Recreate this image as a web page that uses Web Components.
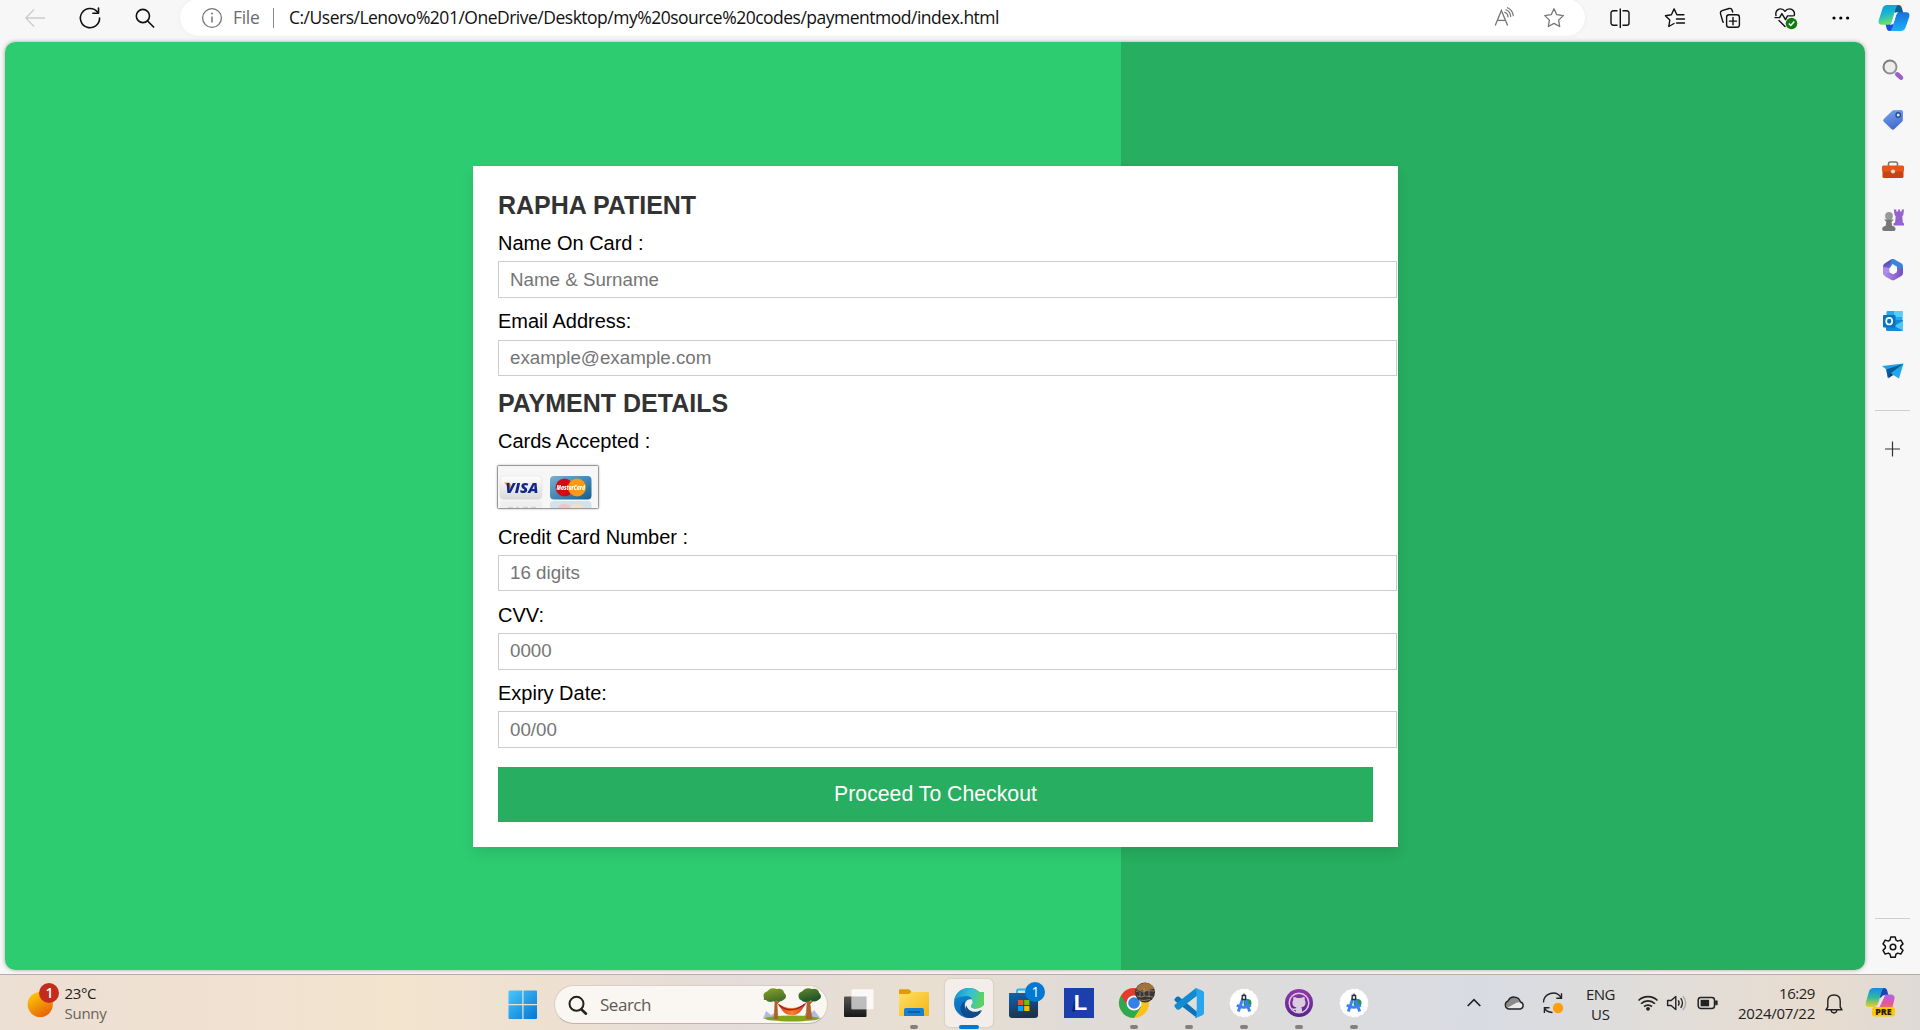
<!DOCTYPE html>
<html lang="en">
<head>
<meta charset="utf-8">
<title>Payment</title>
<style>
html,body{margin:0;height:100%;overflow:hidden}
body{font-family:"Liberation Sans",Arial,sans-serif;background:#f7f7f7}
</style>
</head>
<body>
<desktop-screen></desktop-screen>
<script>
const ICONS = {
back:[24,24,`<path d="M22 12H3M11 3.5 2.8 12l8.2 8.5" fill="none" stroke="#ccc" stroke-width="1.3"/>`],
reload:[24,24,`<path d="M19.6 6.2A9.6 9.6 0 1 0 21.6 12" fill="none" stroke="#111" stroke-width="1.6" stroke-linecap="round"/><path d="M20.5 2v5.3h-5.6" fill="none" stroke="#111" stroke-width="1.6" stroke-linecap="round" stroke-linejoin="round"/>`],
find:[24,24,`<circle cx="9.9" cy="10" r="6.6" fill="none" stroke="#111" stroke-width="1.6"/><path d="m14.6 15 6 6" stroke="#111" stroke-width="1.7" stroke-linecap="round"/>`],
info:[24,24,`<circle cx="12" cy="12" r="9.4" fill="none" stroke="#757575" stroke-width="1.3"/><path d="M12 10.6v6" stroke="#757575" stroke-width="1.5"/><circle cx="12" cy="7.6" r="1" fill="#757575"/>`],
aloud:[24,24,`<path d="M3.2 19.5 9.4 4.4l6.2 15.100M5.600 14.300h7.700" fill="none" stroke="#757575" stroke-width="1.3"/><path d="M12.800 6.200a5 5 0 0 1 3.200 4.600M14 3.800a7.700 7.700 0 0 1 4.700 6.800M15.500 1.700a10 10 0 0 1 5.800 8" fill="none" stroke="#757575" stroke-width="1.2" stroke-linecap="round"/>`],
star:[24,24,`<path d="m12 2.800 2.800 5.900 6.500.9-4.700 4.500 1.100 6.400L12 17.400l-5.700 3.100 1.100-6.400L2.700 9.600l6.500-.9z" fill="none" stroke="#757575" stroke-width="1.300" stroke-linejoin="round"/>`],
split:[24,24,`<path d="M9.500 4.800H5.200A2.200 2.200 0 0 0 3 7v10a2.200 2.200 0 0 0 2.200 2.200h4.300M14.500 4.800h4.300A2.200 2.200 0 0 1 21 7v10a2.200 2.200 0 0 1-2.200 2.200h-4.300M12.300 2.500v19.500" fill="none" stroke="#111" stroke-width="1.400"/>`],
favs:[24,24,`<path d="M11 17.500 5.800 20.500 6.800 14 2.400 9.700l6-1 2.700-5.800 2.800 5.800h7M13.500 13h8M13.500 17h8" fill="none" stroke="#111" stroke-width="1.400" stroke-linejoin="round" stroke-linecap="round"/>`],
collect:[24,24,`<rect x="8.600" y="8.700" width="12.800" height="12.600" rx="2.600" fill="none" stroke="#111" stroke-width="1.400"/><path d="M15 11.500v7.200M11.400 15.100h7.200M5.300 16.200 4.900 16 2.500 7.600a2.300 2.300 0 0 1 1.600-2.900l7-2.200a2.300 2.300 0 0 1 2.900 1.600l.7 1.900" fill="none" stroke="#111" stroke-width="1.400" stroke-linecap="round"/>`],
heart:[24,24,`<path d="M3 9.500C2 5 5 2.900 7.500 2.900c2.200 0 3.800 1.300 4.500 2.400.7-1.100 2.300-2.400 4.500-2.400 3 0 5.800 2.700 4.700 6.600M2 11.600h4.600l2.300-4 3.600 6 2-3.700h5.500M6 14.500l6 6" fill="none" stroke="#111" stroke-width="1.400" stroke-linejoin="round" stroke-linecap="round"/><circle cx="18.500" cy="17.500" r="5.800" fill="#107c10"/><path d="m15.800 17.500 2 2 3.500-4" fill="none" stroke="#fff" stroke-width="1.500"/>`],
dots:[24,24,`<circle cx="5" cy="12" r="1.600"/><circle cx="11.800" cy="12" r="1.600"/><circle cx="18.600" cy="12" r="1.600"/>`],
copilot:[32,28,`<defs><linearGradient id="a" x2=".3" y2="1"><stop offset="0" stop-color="#0a9bd8"/><stop offset=".5" stop-color="#19b5d2"/><stop offset="1" stop-color="#6ce36a"/></linearGradient><linearGradient id="b" x2="0" y2="1"><stop offset="0" stop-color="#1a6fdc"/><stop offset="1" stop-color="#18b1fa"/></linearGradient></defs><path d="M12 1h8.500c2 0 2.700 1 3.300 2.800L25.300 9H17z" fill="#0b5f93"/><path d="M19 27h-7.400c-1.800 0-2.500-1.200-3-2.700L7.200 19H15z" fill="#1b4be0"/><path d="M9.500 1H20.500c-1.700.4-2.300 2-2.800 3.500L14 17.600c-.7 2.100-1.800 3.200-4 3.200H4c-3 0-4-1.600-3.200-4.700L4.300 5C5 2.600 6.700 1 9.500 1z" fill="url(#a)"/><path d="M22.500 27H11.500c1.700-.4 2.300-2 2.800-3.500L18 11.400c.7-2.100 1.800-3.200 4-3.200h6c3 0 4 1.600 3.200 4.700L27.700 23c-.7 2.400-2.400 4-5.200 4z" fill="url(#b)"/><path d="M16.500 9.500q.8-1.300 2.500-1.300h1.500q-1.700.5-2.400 2.500L15.600 19q-.6 1.700-2.600 1.800h-1.500q1.600-.6 2.300-2.500z" fill="#fff"/>`],
sfind:[24,24,`<defs><linearGradient id="a" x2="1" y2="1"><stop stop-color="#777"/><stop offset="1" stop-color="#999"/></linearGradient></defs><path d="m14 15 2 1.500" stroke="#aaa" stroke-width="2.500"/><circle cx="9" cy="9" r="6.500" fill="#ededed" stroke="url(#a)" stroke-width="2"/><path d="m16.500 16.500 3.500 3.200" stroke="#9b5fc8" stroke-width="4.500" stroke-linecap="round"/>`],
tag:[24,24,`<defs><linearGradient id="a" x2=".3" y2="1"><stop stop-color="#78a8ef"/><stop offset="1" stop-color="#456bcb"/></linearGradient></defs><path d="M12.500 2.200 20 2q2 0 2 2l-.2 8q0 1-.8 1.700l-7.600 7.300q-1.500 1.400-3 0L2.800 13.700q-1.300-1.400 0-2.800L11 3q.6-.7 1.500-.8z" fill="url(#a)"/><circle cx="17.200" cy="7" r="2.200" fill="#dce9ff" stroke="#25489c" stroke-width="1.400"/>`],
tools:[24,24,`<path d="M7.500 8V5.800Q7.500 4 9.300 4h5.400q1.800 0 1.800 1.800V8" fill="none" stroke="#777" stroke-width="1.600"/><rect x="1.500" y="8" width="21" height="12" rx="1.500" fill="#c8430f"/><path d="M1 9q0-1.500 1.500-1.500h19Q23 7.500 23 9v3.500q0 1-1.500 1h-19Q1 13.500 1 12.500z" fill="#e6561c"/><circle cx="12" cy="13.500" r="2.100" fill="#d7dbe0"/>`],
chess:[24,24,`<path d="M12.800 1.500h2.500v2h1.800v-2H19v2h1.700v-2H23L22.300 7l-1 1.200.5 6.200 1.200 1v2H12.500v-2l1.600-1 .6-6.200-1.100-1.200z" fill="#9560cf"/><circle cx="8" cy="8" r="3.900" fill="#999"/><path d="M3 11.500h10l-2.500 2.200.7 4.300q3.300.3 3.300 3 0 2-1.500 2H3q-1.800 0-1.800-2 0-2.700 3.400-3l.7-4.300z" fill="#777"/>`],
m365:[24,24,`<defs><linearGradient id="a" x2="0" y2="1"><stop stop-color="#5c3ba5"/><stop offset="1" stop-color="#6c9cf4"/></linearGradient><linearGradient id="b" x1="1" x2="0"><stop stop-color="#6f4fc4"/><stop offset="1" stop-color="#b98ae6"/></linearGradient></defs><path d="M10 1.500q2-.8 4 .3L9.500 9v6l-3 4.200-3-1.700Q2 16.600 2 14.500v-6q0-2 1.600-3z" fill="url(#a)"/><path d="M10.500 1.400q1.500-.7 3 0L20.300 5.300Q22 6.400 22 8.500V15l-6-2.500V8.700L11.500 6 8 8.500z" fill="#3a84e0"/><path d="M22 11v4q0 2-1.600 3l-7 4q-1.400.8-3 0l-7-4 5.500-3.500 4 1 3.600-2.800V9.500z" fill="url(#b)"/><path d="M2 9v5.500q0 2 1.500 3l5.500-3.500v-4z" fill="#b48be8"/><path d="m12 8.200 3.600 2v4.200L12 16.300l-3.600-2V10z" fill="#fff"/>`],
outlook:[24,24,`<rect x="5.500" y="2" width="16" height="12" rx="1" fill="#28a8e8"/><path d="M13 2h8.500v6H13z" fill="#50d0fa"/><path d="M5 11h17v9.500q0 1.500-1.500 1.500h-14Q5 22 5 20.500z" fill="#1489d8"/><path d="M22 12v9.500L13 17z" fill="#50c8f5"/><rect x="2" y="6" width="12.500" height="12.500" rx="1" fill="#0872c4"/><ellipse cx="8.200" cy="12.200" rx="3" ry="3.300" fill="none" stroke="#fff" stroke-width="1.700"/>`],
plane:[24,24,`<defs><linearGradient id="a" x2="0" y2="1"><stop stop-color="#18a4e0"/><stop offset="1" stop-color="#2aa7f5"/></linearGradient></defs><path d="m1 7 21.500-2.500L18 19.500 12 16l-5.500 2.500L6 11z" fill="url(#a)"/><path d="M5 10.500 22 5 9.500 14.500 7 19z" fill="#075a9c"/><path d="m9.500 14 2.700 2L7 19.500z" fill="#0a3c73"/>`],
plus:[24,24,`<path d="M11.500 4.500v15M4 12h15" stroke="#333" stroke-width="1.200"/>`],
gear:[24,24,`<path d="m9.800 1.900h4.400l.8 3.200 1.700 1 3.100-1 2.200 3.800-2.300 2.200v2l2.300 2.200-2.200 3.800-3.100-1-1.700 1-.8 3.100H9.800L9 19.100l-1.700-1-3.100 1L2 15.300l2.300-2.200v-2L2 8.900l2.200-3.800 3.100 1 1.700-1z" fill="none" stroke="#111" stroke-width="1.500" stroke-linejoin="round"/><circle cx="12" cy="12" r="2.800" fill="none" stroke="#111" stroke-width="1.500"/>`],
cards:[102,44,`<defs><linearGradient id="w" x2="0" y2="1"><stop stop-color="#fff"/><stop offset="1" stop-color="#d9d9d9"/></linearGradient><linearGradient id="m" x2="1" y2="1"><stop stop-color="#78b2d1"/><stop offset="1" stop-color="#125e96"/></linearGradient><clipPath id="c"><rect x="1" y="35" width="99" height="8"/></clipPath></defs><rect x=".5" y=".5" width="101" height="43" rx="1" fill="#f6f6f6" stroke="#999"/><rect x="3" y="11" width="42" height="23.500" rx="4" fill="url(#w)" stroke="#e2e2e2" stroke-width=".7"/><rect x="53" y="11" width="41.500" height="23.500" rx="4" fill="url(#m)"/><path d="M7 17.500h5.500l2.500 4-2 3z" fill="#f4a52a"/><text x="8.500" y="27.600" font-family="Open Sans" font-size="13.500" font-weight="800" font-style="italic" fill="#11278c" textLength="33" lengthAdjust="spacingAndGlyphs">VISA</text><circle cx="67.500" cy="22.500" r="9" fill="#d00b12"/><circle cx="80" cy="22.500" r="9" fill="#f99b12"/><text x="59.500" y="25.200" font-family="Open Sans" font-size="7" font-weight="800" font-style="italic" fill="#fff" textLength="28.500" lengthAdjust="spacingAndGlyphs">MasterCard</text><g clip-path="url(#c)" opacity=".25"><rect x="3" y="36" width="42" height="12" rx="4" fill="#ddd"/><rect x="53" y="36" width="41.500" height="12" rx="4" fill="#6ba8ca"/><circle cx="67.500" cy="47" r="8" fill="#e33"/><circle cx="80" cy="47" r="8" fill="#f93"/><path d="m11 42.500h5m3 0h3m4 0h5m3 0h5" stroke="#668" stroke-width="1.500"/></g>`],
sun:[34,36,`<defs><linearGradient id="a" x1=".2" x2=".8" y2="1"><stop stop-color="#fccb08"/><stop offset="1" stop-color="#e65c04"/></linearGradient></defs><circle cx="13.200" cy="21.500" r="12.600" fill="url(#a)"/><circle cx="22" cy="10" r="10" fill="#c42b1c"/><text x="22.400" y="15.200" text-anchor="middle" font-family="Open Sans" font-size="14" fill="#fff" font-weight="600">1</text>`],
windows:[30,30,`<defs><linearGradient id="a" gradientUnits="userSpaceOnUse" x1="0" y1="0" x2="29" y2="29"><stop stop-color="#48c9fd"/><stop offset="1" stop-color="#0676d4"/></linearGradient></defs><path d="M1.500.5h12.800V14H.5V1.500q0-1 1-1zM15.500.5H28q1 0 1 1V14H15.500zM.5 15.200h13.800v13.800H1.500q-1 0-1-1zM15.500 15.200H29V28q0 1-1 1H15.500z" fill="url(#a)"/>`],
tfind:[22,22,`<circle cx="9.500" cy="9.800" r="7" fill="none" stroke="#222" stroke-width="2"/><path d="m14.500 15.500 4.500 4.200" stroke="#222" stroke-width="2.600" stroke-linecap="round"/>`],
trees:[58,34,`<defs><linearGradient id="g" x2="1" y2="1"><stop stop-color="#8da329"/><stop offset="1" stop-color="#0d4928"/></linearGradient><linearGradient id="h" x2="1"><stop stop-color="#d4331d"/><stop offset=".5" stop-color="#f58627"/><stop offset="1" stop-color="#d52c3c"/></linearGradient></defs><path d="m0 31 3-8 5 4 4-2 4 6zM39 31l4-6 4 2 4-5 7 9z" fill="#b5b9dc"/><ellipse cx="29" cy="30.500" rx="27" ry="3" fill="#83a51e"/><path d="m11 31 1-17-5-4 5 3 1-4 1 5 6-4-6 6 1 15zM43 31l1-16-5-4 6 3 1-4 1 4 6-4-6 6 2 15z" fill="#a9632c" stroke="#a9632c" stroke-width=".6"/><path d="M1 10Q-1 5 4 3.500q4-5 10-2.500 6-1 7 3.500 4 4.500 0 7-4 3.500-8 1-7 3-10-.5Q0 12.500 1 10zM36 10q-2-5 3-6.500 4-5 10-2.500 6-1 7 3.500 4 4.500 0 7-4 3.500-8 1-7 3-10-.5-2-.5-2-2z" fill="url(#g)"/><path d="M14 15q7 5 14 5 9 0 16-6l-6 9q-4 5-10 4-6 0-9-5z" fill="url(#h)"/><path d="M16 17q12 10 26-1" fill="none" stroke="#a51d22" stroke-width="1.400"/>`],
taskview:[30,28,`<defs><linearGradient id="a" x2="0" y2="1"><stop stop-color="#555"/><stop offset="1" stop-color="#171717"/></linearGradient></defs><rect y="7.500" width="22.500" height="20.500" rx="1" fill="url(#a)"/><rect x="7.500" y=".3" width="22" height="20" rx="1" fill="#fff" opacity=".8"/><path d="M7.500 7.500h15v12.800h-15z" fill="#aaa" opacity=".6"/>`],
folder:[30,28,`<defs><linearGradient id="a" x2="1" y2="1"><stop stop-color="#ffe069"/><stop offset="1" stop-color="#f4b411"/></linearGradient></defs><path d="M0 1.500Q0 .3 1.200.3h8q1 0 1.700.8L13 3.500V9H0z" fill="#e19a05"/><path d="M0 5h10l2.500-2H29q1 0 1 1v22q0 1-1 1H1q-1 0-1-1z" fill="url(#a)"/><path d="M5 27v-6q0-2 2-2h16q2 0 2 2v6z" fill="#167ed3"/><path d="M9 23h12" stroke="#0c4b85" stroke-width="1.300"/>`],
edge:[30,30,`<defs><linearGradient id="a" gradientUnits="userSpaceOnUse" x1="0" y1="5" x2="30" y2="14"><stop stop-color="#1793cf"/><stop offset=".5" stop-color="#35c1d6"/><stop offset="1" stop-color="#62d64a"/></linearGradient><linearGradient id="b" x2=".3" y2="1"><stop stop-color="#1487cd"/><stop offset="1" stop-color="#096bc0"/></linearGradient></defs><circle cx="15" cy="15" r="15" fill="url(#b)"/><path d="M0 13C1.500 3 9 0 15 0c8.500 0 15 6.500 15 13 0 5-3.600 7.500-8 7.500-3.800 0-5.700-1.500-4.500-3.200C20 14 18.500 7 10.500 8.200 5.500 8.500 1.500 10 0 13z" fill="url(#a)"/><path d="M11 13c-3 8 3 14 10 13 3-.4 5-2 6.500-3C24 29 19 30.500 14 30 6 28.500 3.500 17 11 13z" fill="#124b8c"/><path d="M18 11.500c-5-1.500-9 4-6 9 3 5.500 10 6 15 2.500l3-2.500v-4c-2.500 4-8 4.800-11.300 3.500-1.700-.6-2.300-1.500-1.200-2.900 1.300-1.500 1.800-3.800.5-5.600z" fill="#f2efea"/><path d="M18 12c2 3-.5 4.300-.8 5.900-.4 1.800 2 2.600 4.800 2.600 4.500 0 8-2.800 8-7.500V4H19z" fill="url(#a)"/><path d="M27 22c-7 4-13 1-15-5-1 8 5 12 11 10q3-1 4-5z" fill="#124b8c"/>`],
store:[38,38,`<defs><linearGradient id="a" x2=".3" y2="1"><stop stop-color="#0e65b4"/><stop offset="1" stop-color="#20324b"/></linearGradient></defs><path d="M8 13V9q0-1.500 1.500-1.500H20" fill="none" stroke="#1db7ed" stroke-width="1.800"/><path d="M0 11h29v22q0 3-3 3H3q-3 0-3-3z" fill="url(#a)"/><path d="M9 18h5.300v5H9z" fill="#f25022"/><path d="M15.200 18h5.200v5h-5.200z" fill="#7fba00"/><path d="M9 24h5.300v5H9z" fill="#00a4ef"/><path d="M15.200 24h5.200v5h-5.200z" fill="#ffb900"/><circle cx="26" cy="10" r="10" fill="#0078d4"/><text x="26.500" y="15.200" text-anchor="middle" font-family="Open Sans" font-size="14" fill="#fff">1</text>`],
lbox:[30,30,`<path d="M0 0h30v30H0z" fill="#1d3fae"/><path d="m8 24 3.500-16v15z" fill="#0e2254"/><text x="9.700" y="21.900" font-family="Liberation Sans" font-weight="bold" font-size="22" fill="#fff">L</text>`],
chrome:[36,36,`<circle cx="15" cy="21" r="15" fill="#fbc116"/><path d="M15 21 2 13.500A15 15 0 0 0 15 36l7-11z" fill="#2da94f"/><path d="M2 13.500A15 15 0 0 1 28 13.500L15 15l-6.500 9z" fill="#e33b2e"/><circle cx="15" cy="21" r="7.500" fill="#fff"/><circle cx="15" cy="21" r="5.800" fill="#347fe8"/><circle cx="26" cy="10.500" r="10" fill="#3b3532"/><path d="M17 7.500C20-1 32-1 35.500 6.500L26 9z" fill="#a0733e"/><path d="m17 9.500 4-1 3 1.500 4-1.500 7 .5M18 14l4 1 4-1 8 1M20 18l5 .5 6-1M25 6v8M21 10v5M30 9v6" stroke="#beb19d" stroke-width="1" fill="none" opacity=".55"/>`],
vscode:[30,30,`<path d="m2.700 8.800 2.100-.4L23 23.800V30L1 13q-1.500-1.200 0-2.600z" fill="#0d72b7"/><path d="M1 19.200q-1.500-1.500 0-2.700L22 0l2 7L5 21.800l-2.200-.4z" fill="#138bd0"/><path d="m22 0 6.500 2.800Q30 3.500 30 5v20q0 1.500-1.500 2.200L22 30q-2 0 .5-3V3q-2.500-3-.5-3z" fill="#27a5ed"/><path d="M22.500 8.500v13L14 15z" fill="#deddd9"/>`],
android:[30,30,`<circle cx="15" cy="15" r="13.600" fill="#fff" stroke="#fff" stroke-width="1.500" stroke-dasharray="4 1"/><circle cx="18.500" cy="15" r="4" fill="#209653"/><path d="m14 10-4.700 13.500M15.800 10l4.900 13.500M7.800 17.300q7 4 14 0" stroke="#3d82f0" stroke-width="2.900" fill="none"/><path d="M13.200 7.500h3.400v4h-3.400zM15 5.500v2" fill="#eee" stroke="#253142" stroke-width="1.300"/>`],
github:[30,30,`<defs><linearGradient id="a" x2="0" y2="1"><stop stop-color="#9237aa"/><stop offset="1" stop-color="#59258e"/></linearGradient></defs><circle cx="15" cy="15" r="14" fill="url(#a)"/><circle cx="15" cy="15" r="9.800" fill="none" stroke="#d9ccdf" stroke-width="1.500"/><path d="M9.500 9q2.300.1 3.500 1h4q1.500-1 3.500-1 .6 1.800.2 3 1.300 1.800.7 4-.8 3-4.200 3.300.8 1 .8 2.200v3h-6v-2.200q-3.200.5-4.500-2.600 2.500 1.600 4.600.4l.3-.9Q9 19 8.500 16q-.4-2.300.8-4-.4-1.400.2-3z" fill="#d9ccdf"/>`],
up:[24,24,`<path d="m5.700 15 6.300-6.300 6.300 6.300" fill="none" stroke="#222" stroke-width="1.700"/>`],
cloud:[24,24,`<path d="M6.500 18a4.300 4.300 0 0 1-.3-8.200 6.500 6.500 0 0 1 12.200 1.200 3.600 3.600 0 0 1 0 7z" fill="#e9e9e9"/><path d="M6 9.800a6.300 6.300 0 0 1 12 1.200l-3.500.8L6 16.500 3 13z" fill="#8b8b8b"/><path d="M6.500 18a4.300 4.300 0 0 1-.3-8.200 6.500 6.500 0 0 1 12.200 1.200 3.600 3.600 0 0 1 0 7z" fill="none" stroke="#222" stroke-width="1.400"/>`],
sync:[24,24,`<path d="M2.500 11.500A9.500 9.500 0 0 1 20 6.500M20.500 2.300v5h-5.200M8.500 16.700H3.400V22M3.500 17q1.500 4 8 4.500" fill="none" stroke="#222" stroke-width="1.400"/><circle cx="17" cy="17" r="5.200" fill="#ff9e0c"/>`],
wifi:[24,24,`<path d="M2.500 9.500a13.500 13.500 0 0 1 19 0M5 12.700a10 10 0 0 1 14 0M8 15.700a5.800 5.800 0 0 1 8 0" fill="none" stroke="#222" stroke-width="1.600"/><circle cx="12" cy="17.800" r="1.900" fill="#222"/>`],
volume:[24,24,`<path d="M2.600 9.500v5h3.500l4.700 4V5.500l-4.700 4z" fill="none" stroke="#222" stroke-width="1.400" stroke-linejoin="round"/><path d="M13.300 9.300q1.700 2.700 0 5.400M15.700 7.200q3.500 4.800 0 9.600" fill="none" stroke="#222" stroke-width="1.300"/><path d="M18 5q5.300 7 0 14" fill="none" stroke="#aaa" stroke-width="1.300"/>`],
battery:[24,24,`<rect x="2.200" y="6.500" width="16.300" height="11" rx="2.700" fill="none" stroke="#222" stroke-width="1.500"/><rect x="4.600" y="8.800" width="8.500" height="6.500" fill="#222"/><path d="M19.300 9.800h2v4h-2z" stroke="#222" fill="#222" stroke-width=".6"/>`],
bell:[24,24,`<path d="M5.800 16V10q0-6 6.200-6t6.200 6v6l1.800 2.800H4zM9 19q.5 3 3 3t3-3" fill="none" stroke="#222" stroke-width="1.400" stroke-linejoin="round"/>`],
pre:[32,32,`<defs><linearGradient id="a" x2="0" y2="1"><stop stop-color="#178ae9"/><stop offset=".5" stop-color="#31b9a0"/><stop offset="1" stop-color="#f3cf18"/></linearGradient><linearGradient id="b" x2="0" y2="1"><stop stop-color="#aa65ed"/><stop offset=".6" stop-color="#e6549a"/><stop offset="1" stop-color="#f17550"/></linearGradient></defs><path d="M12 1h7q3 0 3.500 4l1 3.500L14 11z" fill="#1a43b5"/><path d="M8.500 1H19q-2 1-2.500 4l-3 10q-1 5-5 5H4Q-.5 20 1 15L4 4.500Q5 1 8.500 1z" fill="url(#a)"/><path d="M13 20q2-6 3.500-9.500 1-3 4.500-3h5q4.500.5 3.300 5L27 22H12z" fill="url(#b)"/><path d="m16.500 10 1.500-1.500h2L15.500 18l-1.200 2H11q2-1 2.700-3.500z" fill="#eee6ea"/><rect x="7" y="20" width="23" height="9.500" rx="2.500" fill="#ffc800"/><text x="18.500" y="27.800" text-anchor="middle" font-family="Open Sans" font-size="8.500" font-weight="800" textLength="16.500" lengthAdjust="spacingAndGlyphs" fill="#231b08">PRE</text>`]
};
function define(name, html, setup){
  const t=document.createElement('template'); t.innerHTML=html;
  customElements.define(name, class extends HTMLElement{
    connectedCallback(){
      if(this.shadowRoot) return;
      const r=this.attachShadow({mode:'open'});
      r.append(t.content.cloneNode(true));
      if(setup) setup.call(this,r);
    }
  });
}
define('ui-icon','<style>:host{display:block;flex:none}svg{display:block;overflow:visible}</style>',function(r){
  const [w,h,body]=ICONS[this.getAttribute('name')];
  const box=document.createElement('div');
  box.innerHTML=`<svg width="${w}" height="${h}" viewBox="0 0 ${w} ${h}">${body}</svg>`;
  r.append(box);
});
/* Text line whose letter spacing is tuned to fill a given width. */
define('fit-text','<style>:host{display:block;white-space:pre;flex:none}span{display:inline-block}</style><span><slot></slot></span>',function(r){
  const s=r.querySelector('span'), n=this.textContent.length;
  const w=+this.getAttribute('width');
  this.style.width=w+'px';
  s.style.letterSpacing=((w-s.getBoundingClientRect().width)/n)+'px';
});
define('address-bar',`<style>
:host{display:flex;align-items:center;box-sizing:border-box;width:1405px;height:37px;margin-top:-1px;background:#fff;border-radius:19px;padding:0 19px 0 20px;box-shadow:0 0 5px #0000000d;font:17.500px/24px "Open Sans","Noto Sans",sans-serif;flex:none}
.file{color:#6b6b6b;margin:-1px 0 0 9px}.bar{width:1.500px;height:20px;background:#8a8a8a;margin:0 15px 0 13px}
.url{color:#111;margin-top:-1px}.a{margin:0 26px 0 auto}
</style><ui-icon name="info"></ui-icon><fit-text class="file" width="26.500">File</fit-text><div class="bar"></div><fit-text class="url" width="710">C:/Users/Lenovo%201/OneDrive/Desktop/my%20source%20codes/paymentmod/index.html</fit-text><ui-icon class="a" name="aloud"></ui-icon><ui-icon name="star"></ui-icon>`);
define('browser-toolbar',`<style>
:host{display:flex;align-items:center;height:36px;margin-bottom:6px}
.g{display:flex;align-items:center}.g>div{width:55px;display:flex;justify-content:center}
.l{width:173px;padding-left:7px}.r{margin-left:7px}.r>div{width:55.250px}
.c{width:51px;display:flex;justify-content:center}
</style><div class="g l"><div><ui-icon name="back"></ui-icon></div><div><ui-icon name="reload"></ui-icon></div><div><ui-icon name="find"></ui-icon></div></div><address-bar></address-bar><div class="g r"><div><ui-icon name="split"></ui-icon></div><div><ui-icon name="favs"></ui-icon></div><div><ui-icon name="collect"></ui-icon></div><div><ui-icon name="heart"></ui-icon></div><div><ui-icon name="dots"></ui-icon></div></div><div class="c"><ui-icon name="copilot"></ui-icon></div>`);
define('side-bar',`<style>
:host{display:flex;flex-direction:column;align-items:center;width:55px;height:932px;box-sizing:border-box;padding-top:3px}
div{height:50.100px;display:flex;align-items:center;padding-left:1px}
hr{width:35px;height:1px;border:0;background:#cfcfcf;margin:0;flex:none}
</style><div><ui-icon name="sfind"></ui-icon></div><div><ui-icon name="tag"></ui-icon></div><div><ui-icon name="tools"></ui-icon></div><div><ui-icon name="chess"></ui-icon></div><div><ui-icon name="m365"></ui-icon></div><div><ui-icon name="outlook"></ui-icon></div><div><ui-icon name="plane"></ui-icon></div><hr style="margin-top:14px"><div style="height:77px;padding:0"><ui-icon name="plus"></ui-icon></div><hr style="margin-top:auto"><div style="height:55px;padding:0"><ui-icon name="gear"></ui-icon></div>`);
define('form-field',`<style>
:host{display:block}label{display:block;font-size:20px;line-height:23px;color:#000}
input{display:block;box-sizing:border-box;width:899px;height:var(--h,37px);margin-top:var(--g,6px);border:1px solid #ccc;padding:0 11px var(--b,0);font:18.750px "Liberation Sans",Arial,sans-serif;outline:0;background:#fff}
input::placeholder{color:#757575;opacity:1}
</style><label><slot></slot></label><input>`,function(r){r.querySelector('input').placeholder=this.getAttribute('hint')});
define('payment-form',`<style>
:host{display:block;box-sizing:border-box;width:925px;height:681px;background:#fff;padding:25px;box-shadow:0 6px 12px #0000001a}
h3{font-size:25px;line-height:29px;margin:0 0 12px;color:#333}
p{margin:0 0 12px;font-size:20px;line-height:23px}
ui-icon{margin:0 0 17px -1px;filter:drop-shadow(0 0 1px #0004)}
button{display:block;width:100%;height:55px;border:0;margin-top:19px;background:#27ae60;color:#fff;font:21.250px "Liberation Sans",Arial,sans-serif}
</style>
<h3>RAPHA PATIENT</h3>
<form-field hint="Name &amp; Surname">Name On Card :</form-field>
<form-field hint="example@example.com" style="margin-top:12px;--g:7px;--h:36px">Email Address:</form-field>
<h3 style="margin-top:13px">PAYMENT DETAILS</h3>
<p>Cards Accepted :</p><ui-icon name="cards"></ui-icon>
<form-field hint="16 digits" style="--h:36px">Credit Card Number :</form-field>
<form-field hint="0000" style="margin-top:13px;--b:2px">CVV:</form-field>
<form-field hint="00/00" style="margin-top:12px">Expiry Date:</form-field>
<button type="button">Proceed To Checkout</button>`);
define('web-page',`<style>
:host{display:flex;box-sizing:border-box;width:1860px;height:928px;margin-left:5px;padding:124px 0 0 468px;border-radius:10px;box-shadow:0 0 4px #0005;background:linear-gradient(90deg,#2ecc71 1116px,#27ae60 1116px)}
</style><payment-form></payment-form>`);
define('search-pill',`<style>
:host{display:flex;align-items:center;box-sizing:border-box;width:274px;height:39px;border-radius:20px;background:#faf6f1;border:1px solid #d9cfc6;border-bottom-color:#bdb5ae;padding:0 6px 0 12px;font:17px/24px "Open Sans",sans-serif;color:#5d5a57}
fit-text{margin-left:11px}.t{margin-left:auto}
</style><ui-icon name="tfind"></ui-icon><fit-text width="51">Search</fit-text><ui-icon class="t" name="trees"></ui-icon>`);
define('task-app',`<style>
:host{display:flex;flex-direction:column;align-items:center;justify-content:center;position:relative;width:55px;height:55px;flex:none}
:host([active]) .tile{background:#f3eee9;border-radius:5px;box-shadow:0 0 2px #0003}
.tile{width:48px;height:48px;display:flex;align-items:center;justify-content:center}
i{position:absolute;bottom:2px;width:8px;height:4px;border-radius:2px;background:#85807d;display:none}
:host([open]) i{display:block}:host([active]) i{display:block;width:20px;background:#0078d4}
</style><div class="tile"><slot></slot></div><i></i>`);
define('task-bar',`<style>
:host{display:flex;align-items:center;box-sizing:border-box;height:56px;border-top:1px solid #b6aca6;position:relative;background:linear-gradient(90deg,#ecdfd3 0,#f0e1d1 250px,#f3e4ce 400px,#ede0d2 560px,#e4dcda 740px,#e9dfd1 930px,#e0dbd7 1080px,#dddcdc 1280px,#d8dbe2 1480px,#dfdddb 1630px,#e8dccf 1815px,#dfdad5 1920px);font:15px/20px "Open Sans",sans-serif;color:#222}
.s{color:#69625c}
.two{display:flex;flex-direction:column}.apps{display:flex;margin-left:3px}
.tray{display:flex;align-items:center;margin-left:auto;padding-right:23px}
</style>
<ui-icon name="sun" style="margin:-3px 0 0 27px"></ui-icon>
<div class="two" style="margin:0 0 0 3.500px"><fit-text width="31.500">23°C</fit-text><fit-text class="s" width="42">Sunny</fit-text></div>
<ui-icon name="windows" style="margin:4px 0 0 401px"></ui-icon>
<search-pill style="margin:4px 0 0 16.500px"></search-pill>
<div class="apps" style="margin-top:1px"><task-app><ui-icon name="taskview"></ui-icon></task-app><task-app open><ui-icon name="folder"></ui-icon></task-app><task-app active><ui-icon name="edge"></ui-icon></task-app><task-app><ui-icon name="store" style="margin:-4px -7px 0 1px"></ui-icon></task-app><task-app><ui-icon name="lbox"></ui-icon></task-app><task-app open><ui-icon name="chrome" style="margin:-6px -6px 0 0"></ui-icon></task-app><task-app open><ui-icon name="vscode"></ui-icon></task-app><task-app open><ui-icon name="android"></ui-icon></task-app><task-app open><ui-icon name="github"></ui-icon></task-app><task-app open><ui-icon name="android"></ui-icon></task-app></div>
<div class="tray"><ui-icon name="up"></ui-icon><ui-icon name="cloud" style="margin-left:16px"></ui-icon><ui-icon name="sync" style="margin-left:15px"></ui-icon>
<div class="two" style="align-items:center;margin:2px 0 0 21px"><fit-text width="29">ENG</fit-text><fit-text width="19">US</fit-text></div>
<ui-icon name="wifi" style="margin-left:21px"></ui-icon><ui-icon name="volume" style="margin-left:5px"></ui-icon><ui-icon name="battery" style="margin-left:7px"></ui-icon>
<div class="two" style="align-items:flex-end;margin:0 0 0 18px"><fit-text width="36">16:29</fit-text><fit-text width="77">2024/07/22</fit-text></div>
<ui-icon name="bell" style="margin-left:7px"></ui-icon><ui-icon name="pre" style="margin-left:19px"></ui-icon></div>`);
define('desktop-screen',`<style>
:host{display:flex;flex-direction:column;width:1920px;height:1030px;overflow:hidden;background:#f7f7f7}
main{display:flex;height:932px}
</style><browser-toolbar></browser-toolbar><main><web-page></web-page><side-bar></side-bar></main><task-bar></task-bar>`);
</script>
</body>
</html>
